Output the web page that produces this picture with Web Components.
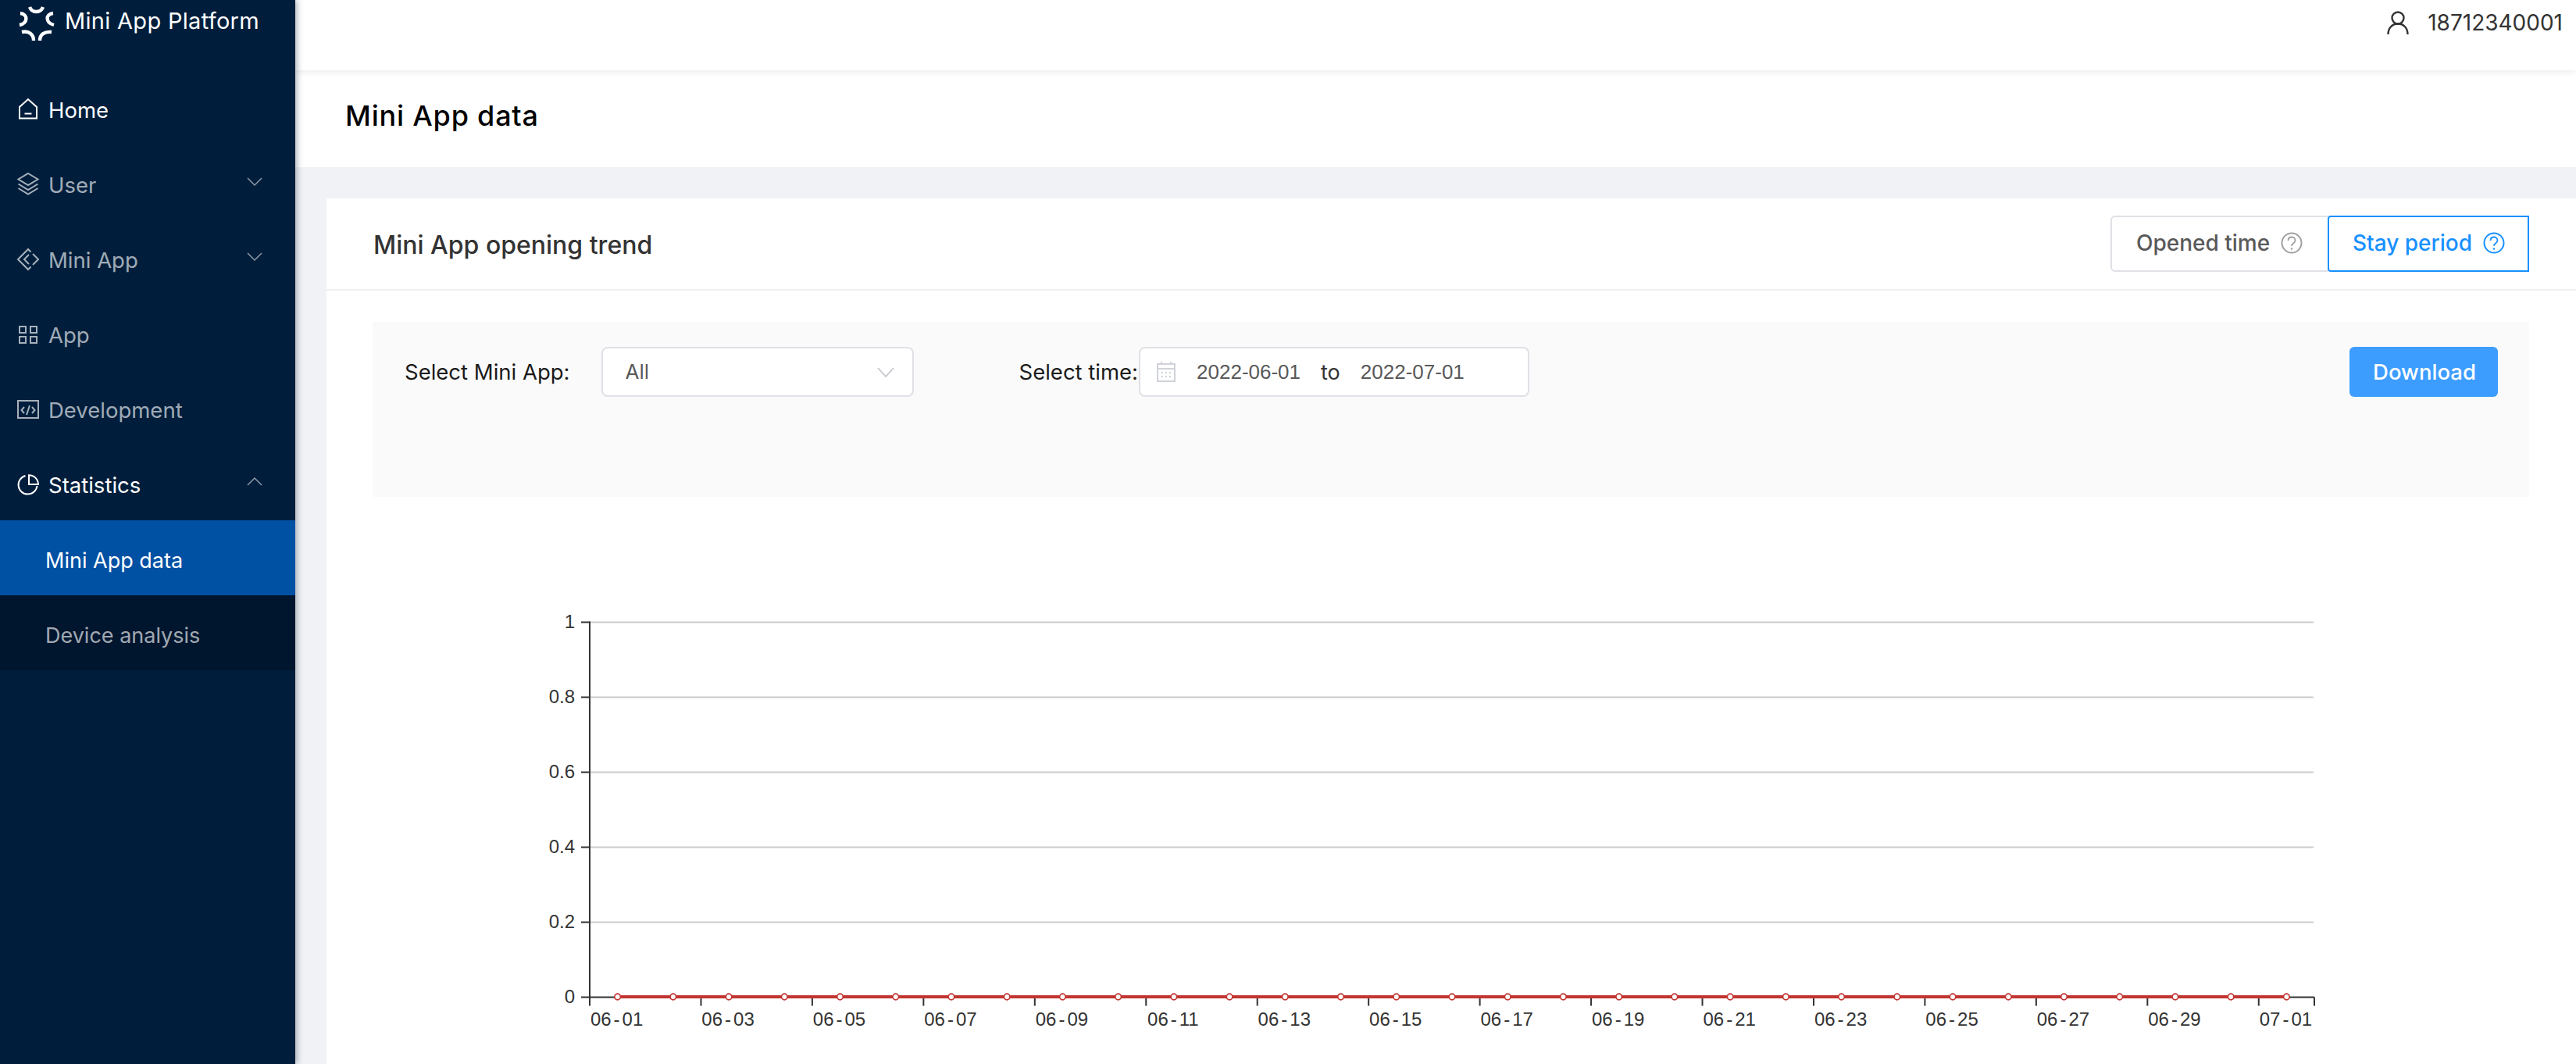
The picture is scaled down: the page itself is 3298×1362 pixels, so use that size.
<!DOCTYPE html>
<html>
<head>
<meta charset="utf-8">
<title>Mini App data</title>
<style>
  html, body { margin: 0; height: 100%; overflow: hidden; }
  body { font-family: Inter, "Noto Sans", sans-serif; background: #f0f2f5; }
</style>
</head>
<body>
<app-shell>
  <side-nav slot="nav">
    <nav-item label="Home" icon="home" active></nav-item>
    <nav-item label="User" icon="layers" arrow="down"></nav-item>
    <nav-item label="Mini App" icon="diamond" arrow="down"></nav-item>
    <nav-item label="App" icon="grid"></nav-item>
    <nav-item label="Development" icon="code"></nav-item>
    <nav-item label="Statistics" icon="pie" arrow="up" active></nav-item>
    <nav-sub label="Mini App data" selected></nav-sub>
    <nav-sub label="Device analysis"></nav-sub>
  </side-nav>
  <top-bar slot="top" user="18712340001"></top-bar>
  <page-head slot="head">Mini App data</page-head>
  <trend-card slot="body" heading="Mini App opening trend">
    <seg-tabs slot="actions"></seg-tabs>
    <filter-bar></filter-bar>
    <line-chart></line-chart>
  </trend-card>
</app-shell>

<script>
const ICONS = {
  home: '<path d="M1 24.500V10L12 0l11 10v14.500z"/><path d="M7.500 18.500h9"/>',
  layers: '<path d="M12-1l12.500 7.500L12 14-.5 6.500z"/><path d="M-.5 12.500L12 20l12.500-7.500"/><path d="M-.5 18L12 25.500 24.500 18"/>',
  diamond: '<path d="M15.500 3.500L12 0-1 13l13 13 3.500-3.500"/><path d="M13 7l-6 6 6 6"/><path d="M18 6l7 7-7 7"/>',
  grid: '<rect x="1" y="3" width="8" height="8"/><rect x="15" y="3" width="8" height="8"/><rect x="1" y="16" width="8" height="8"/><rect x="15" y="16" width="8" height="8"/>',
  code: '<rect x="-1" y="2" width="26" height="22"/><path d="M7 10l-3.500 4L7 18M17 10l3.500 4L17 18M14 8l-4 12"/>',
  pie: '<path d="M8.500 2A12 12 0 1 0 23.500 15"/><path d="M13 1.200V13h12A12 12 0 0 0 13 1.200z"/>'
};

class AppShell extends HTMLElement {
  constructor() {
    super();
    this.attachShadow({ mode: "open" });
    this.shadowRoot.innerHTML = `
      <style>
        :host { display: flex; height: 1362px; overflow: hidden; }
        aside { width: 378px; flex: none; background: #001e3c; box-shadow: 2px 0 8px rgba(0, 21, 41, .35); position: relative; z-index: 2; }
        main { flex: 1; min-width: 0; display: flex; flex-direction: column; }
        .content { padding: 40px 0 0 40px; flex: 1; min-height: 0; }
      </style>
      <aside><slot name="nav"></slot></aside>
      <main>
        <slot name="top"></slot>
        <slot name="head"></slot>
        <div class="content"><slot name="body"></slot></div>
      </main>`;
  }
}

class SideNav extends HTMLElement {
  constructor() {
    super();
    this.attachShadow({ mode: "open" });
    this.shadowRoot.innerHTML = `
      <style>
        :host { display: block; }
        .brand { height: 90px; box-sizing: border-box; display: flex; align-items: flex-start; color: #fff; font-size: 29px; line-height: 54px; padding-left: 83px; position: relative; letter-spacing: .3px; }
        svg { position: absolute; left: 0; top: 0; }
      </style>
      <div class="brand">
        <svg width="80" height="52" viewBox="0 0 80 52" fill="none" stroke="#fff" stroke-width="4.400">
          <path d="M38 9c3 8 14 8 17 0"/>
          <path d="M26 17c10 1 10 13-1 15"/>
          <path d="M68 17c-10 1-10 12 1 15"/>
          <path d="M28 41c9-2 15 3 15 11"/>
          <path d="M51 52c0-8 6-12 15-11"/>
        </svg>
        Mini App Platform
      </div>
      <slot></slot>`;
  }
}

class NavItem extends HTMLElement {
  connectedCallback() {
    if (this.shadowRoot) return;
    this.attachShadow({ mode: "open" });
    const arrow = this.getAttribute("arrow");
    const chevron = arrow === "up" ? "M1 10l9-9 9 9" : "M1 1l9 9 9-9";
    this.shadowRoot.innerHTML = `
      <style>
        :host { display: flex; align-items: center; height: 96px; box-sizing: border-box; padding-top: 6px; color: rgba(255, 255, 255, .65); font-size: 27.500px; position: relative; }
        :host([active]) { color: #fff; }
        .ico { width: 24px; height: 24px; margin: -4px 14px 0 24px; flex: none; overflow: visible; }
        .arrow { position: absolute; left: 316px; top: 41px; overflow: visible; }
      </style>
      <svg class="ico" viewBox="0 0 24 24" fill="none" stroke="currentColor" stroke-width="2">${ICONS[this.getAttribute("icon")]}</svg>
      <span>${this.getAttribute("label")}</span>
      ${arrow ? `<svg class="arrow" width="20" height="11" viewBox="0 0 20 11" fill="none" stroke="rgba(255,255,255,.55)" stroke-width="1.500"><path d="${chevron}"/></svg>` : ""}`;
  }
}

class NavSub extends HTMLElement {
  connectedCallback() {
    if (this.shadowRoot) return;
    this.attachShadow({ mode: "open" });
    this.shadowRoot.innerHTML = `
      <style>
        :host { display: flex; align-items: center; height: 96px; box-sizing: border-box; padding: 6px 0 0 58px; background: #00152e; color: rgba(255, 255, 255, .65); font-size: 27px; }
        :host([selected]) { background: #0050a3; color: #fff; }
      </style>
      <span>${this.getAttribute("label")}</span>`;
  }
}

class TopBar extends HTMLElement {
  connectedCallback() {
    if (this.shadowRoot) return;
    this.attachShadow({ mode: "open" });
    this.shadowRoot.innerHTML = `
      <style>
        :host { display: flex; justify-content: flex-end; height: 90px; background: #fff; color: #333; font-size: 28px; box-shadow: 0 2px 8px rgba(0, 0, 0, .08); position: relative; z-index: 1; padding-right: 17px; line-height: 58px; }
        svg { margin: 14px 24px 0 0; }
      </style>
      <svg width="28" height="30" viewBox="0 0 28 30" fill="none" stroke="#333" stroke-width="2.400"><circle cx="14" cy="9" r="7.500"/><path d="M1.500 30c0-8 5-13.500 12.500-13.500S26.500 22 26.500 30"/></svg>
      <span>${this.getAttribute("user")}</span>`;
  }
}

class PageHead extends HTMLElement {
  constructor() {
    super();
    this.attachShadow({ mode: "open" });
    this.shadowRoot.innerHTML = `
      <style>
        :host { display: flex; align-items: center; height: 124px; box-sizing: border-box; padding: 0 0 8px 64px; background: #fff; color: #000; font-size: 36px; letter-spacing: .8px; font-weight: 500; flex: none; }
      </style>
      <slot></slot>`;
  }
}

class TrendCard extends HTMLElement {
  connectedCallback() {
    if (this.shadowRoot) return;
    this.attachShadow({ mode: "open" });
    this.shadowRoot.innerHTML = `
      <style>
        :host { display: block; height: 1200px; background: #fff; }
        header { display: flex; justify-content: space-between; align-items: center; height: 116px; border-bottom: 2px solid #f0f0f0; padding: 0 60px 0 60px; color: #333; font-size: 32px; font-weight: 500; }
        header span { padding-top: 2px; }
        .body { padding: 40px 60px 0 59px; }
      </style>
      <header><span>${this.getAttribute("heading")}</span><slot name="actions"></slot></header>
      <div class="body"><slot></slot></div>`;
  }
}

class SegTabs extends HTMLElement {
  constructor() {
    super();
    this.attachShadow({ mode: "open" });
    const help = '<svg width="28" height="28" viewBox="0 0 28 28" fill="none" stroke="currentColor" stroke-width="2"><circle cx="14" cy="14" r="12.500"/><path d="M9.500 11c0-3 2-4.500 4.500-4.500s4.500 1.800 4.500 4.300c0 3.700-4.500 3.200-4.500 7" stroke-width="1.800"/><circle cx="14" cy="21.500" r="1.300" fill="currentColor" stroke="none"/></svg>';
    this.shadowRoot.innerHTML = `
      <style>
        :host { display: flex; font-size: 28px; font-weight: 500; }
        div { display: flex; align-items: center; gap: 14px; height: 72px; box-sizing: border-box; padding-bottom: 2px; }
        .off { width: 278px; padding-left: 31px; border: 2px solid #dfe1e6; border-right: 0; border-radius: 6px 0 0 6px; color: #595959; }
        .off svg { color: #a0a0a0; }
        .on { width: 258px; padding-left: 30px; border: 2px solid #1890ff; border-radius: 4px 0 0 4px; color: #1890ff; }
      </style>
      <div class="off">Opened time ${help}</div>
      <div class="on">Stay period ${help}</div>`;
  }
}

class FilterBar extends HTMLElement {
  constructor() {
    super();
    this.attachShadow({ mode: "open" });
    this.shadowRoot.innerHTML = `
      <style>
        :host { display: flex; align-items: flex-start; height: 224px; box-sizing: border-box; padding: 32px 40px 0 41px; background: #fafafa; font-size: 27.500px; color: #1a1a1a; }
        .lbl { height: 64px; line-height: 64px; white-space: nowrap; }
        .box { height: 64px; box-sizing: border-box; background: #fff; border: 2px solid #dfe1e6; border-radius: 8px; display: flex; align-items: center; color: #595959; }
        .select { width: 400px; margin-left: 40px; padding: 0 23px 0 29px; justify-content: space-between; font-size: 26px; }
        .select span { padding-bottom: 2px; }
        .range { width: 500px; margin-left: 1px; padding-left: 21px; }
        .range svg { margin-right: 27px; }
        .date { font: 26px "Liberation Sans", Arial, sans-serif; }
        .to { color: #333; margin: 0 26px; font-size: 27px; }
        .time { margin-left: 135px; }
        button { margin-left: auto; width: 190px; height: 64px; padding: 0 0 0 2px; border: 0; border-radius: 6px; background: #3d9dff; color: #fff; font: 500 27.500px Inter, sans-serif; }
      </style>
      <span class="lbl">Select Mini App:</span>
      <div class="box select"><span>All</span>
        <svg width="22" height="13" viewBox="0 0 22 13" fill="none" stroke="#c4c6cc" stroke-width="1.800"><path d="M1 1l10 11L21 1"/></svg>
      </div>
      <span class="lbl time">Select time:</span>
      <div class="box range">
        <svg width="24" height="26" viewBox="0 0 24 26" fill="none" stroke="#d0d3d9" stroke-width="2"><rect x="1" y="3" width="22" height="22"/><path d="M1 9h22M6 0v4M18 0v4"/><path d="M6 14h2M11 14h2M16 14h2M6 19h2M11 19h2M16 19h2"/></svg>
        <span class="date">2022-06-01</span><span class="to">to</span><span class="date">2022-07-01</span>
      </div>
      <button>Download</button>`;
  }
}

class LineChart extends HTMLElement {
  constructor() {
    super();
    this.attachShadow({ mode: "open" });
    // chart coordinates are the ones measured on the page, the svg sits at 477,636
    const ox = 477, oy = 636;
    const x0 = 755 - ox, x1 = 2963 - ox, base = 1276.5 - oy;
    const step = (x1 - x0) / 31;
    let out = "";
    ["0", "0.2", "0.4", "0.6", "0.8", "1"].forEach((t, i) => {
      const y = base - i * 96;
      if (i) out += `<line x1="${x0}" x2="${x1 - 1}" y1="${y}" y2="${y}" stroke="#ccc" stroke-width="2"/>`;
      out += `<line x1="${x0 - 11}" x2="${x0}" y1="${y}" y2="${y}" stroke="#333" stroke-width="2"/>`;
      out += `<text x="${x0 - 19}" y="${y + 7}" text-anchor="end">${t}</text>`;
    });
    out += `<line x1="${x0}" x2="${x0}" y1="${base - 481}" y2="${base + 1}" stroke="#333" stroke-width="2"/>`;
    out += `<line x1="${x0}" x2="${x1}" y1="${base}" y2="${base}" stroke="#333" stroke-width="2"/>`;
    let dots = "";
    for (let i = 0; i < 31; i++) {
      const cx = x0 + step * (i + .5);
      const d = new Date(Date.UTC(2022, 5, 1 + i));
      const mm = String(d.getUTCMonth() + 1).padStart(2, "0");
      const dd = String(d.getUTCDate()).padStart(2, "0");
      if (i % 2 === 0) {
        out += `<line x1="${x0 + step * i}" x2="${x0 + step * i}" y1="${base}" y2="${base + 11}" stroke="#333" stroke-width="2"/>`;
        out += `<text x="${cx - 1}" y="${base + 36}" text-anchor="middle">${mm}<tspan dx="3">-</tspan><tspan dx="3">${dd}</tspan></text>`;
      }
      dots += `<circle cx="${cx}" cy="${base - .5}" r="3.800" fill="#fff" stroke="#c23531" stroke-width="1.700"/>`;
    }
    out += `<line x1="${x1}" x2="${x1}" y1="${base}" y2="${base + 11}" stroke="#333" stroke-width="2"/>`;
    out += `<line x1="${x0 + step * .5}" x2="${x0 + step * 30.5}" y1="${base - .5}" y2="${base - .5}" stroke="#c23531" stroke-width="4"/>`;
    out += dots;
    this.shadowRoot.innerHTML = `
      <style>
        :host { display: block; }
        svg { display: block; }
        text { font: 24px "Liberation Sans", Arial, sans-serif; fill: #333; }
      </style>
      <svg width="2761" height="726" viewBox="0 0 2761 726">${out}</svg>`;
  }
}

customElements.define("app-shell", AppShell);
customElements.define("side-nav", SideNav);
customElements.define("nav-item", NavItem);
customElements.define("nav-sub", NavSub);
customElements.define("top-bar", TopBar);
customElements.define("page-head", PageHead);
customElements.define("trend-card", TrendCard);
customElements.define("seg-tabs", SegTabs);
customElements.define("filter-bar", FilterBar);
customElements.define("line-chart", LineChart);
</script>
</body>
</html>
